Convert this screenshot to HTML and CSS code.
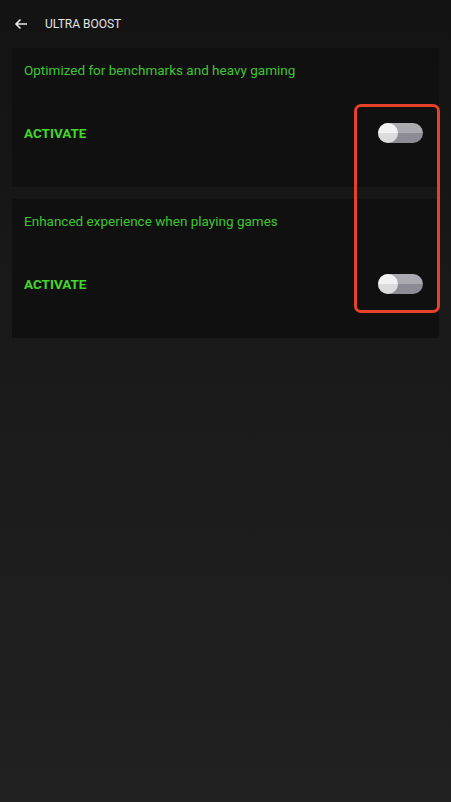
FILE: index.html
```html
<!DOCTYPE html>
<html lang="en">
<head>
  <meta charset="UTF-8" />
  <meta name="viewport" content="width=device-width, initial-scale=1.0" />
  <title>Ultra Boost</title>
  <link rel="stylesheet" href="styles.css">
</head>
<body>

  <div class="top-bar">
    <svg class="back" width="14" height="12" viewBox="0 0 14 12">
      <path d="M13 6H2M6.5 1.5L2 6l4.5 4.5" fill="none" stroke="#e6e6e6" stroke-width="1.6"/>
    </svg>
    <span class="title">ULTRA BOOST</span>
  </div>

  <div class="cards">
    <div class="card">
      <p class="desc">Optimized for benchmarks and heavy gaming</p>
      <div class="card-row">
        <span class="label">ACTIVATE</span>
        <span class="toggle"><span class="knob"></span></span>
      </div>
    </div>

    <div class="card">
      <p class="desc">Enhanced experience when playing games</p>
      <div class="card-row">
        <span class="label">ACTIVATE</span>
        <span class="toggle"><span class="knob"></span></span>
      </div>
    </div>

    <div class="highlight"></div>
  </div>

</body>
</html>
```

FILE: styles.css
```css
* {
  box-sizing: border-box;
  margin: 0;
  padding: 0;
}

html, body {
  height: 100%;
}

body {
  font-family: Roboto, "Noto Sans", sans-serif;
  background: linear-gradient(180deg, #131313 0%, #1a1a1a 45%, #212121 100%);
  color: #e6e6e6;
}

.top-bar {
  display: flex;
  align-items: center;
  height: 48px;
  padding-left: 14px;
}

.back {
  display: block;
}

.title {
  margin-left: 17px;
  font-size: 12px;
  color: #e4e4e4;
}

.cards {
  position: relative;
  display: flex;
  flex-direction: column;
  gap: 12px;
  margin: 0 12px;
}

.card {
  background: #101010;
  height: 139px;
  padding: 12px 16px 0 12px;
}

.desc {
  font-size: 13.5px;
  line-height: 20px;
  color: #3fc532;
}

.card-row {
  display: flex;
  align-items: center;
  justify-content: space-between;
  margin-top: 43px;
  height: 20px;
}

.label {
  font-size: 13.5px;
  font-weight: bold;
  color: #44d62c;
}

.toggle {
  position: relative;
  display: block;
  width: 45px;
  height: 20px;
  border-radius: 10px;
  background: linear-gradient(180deg, #abaab1 50%, #8d8c94 50%);
}

.knob {
  position: absolute;
  left: 0;
  top: 0;
  width: 20px;
  height: 20px;
  border-radius: 50%;
  background: linear-gradient(180deg, #f2f2f2 50%, #dcdcdc 50%);
}

.highlight {
  position: absolute;
  left: 342px;
  top: 56px;
  width: 86px;
  height: 209px;
  border: 3px solid #e8412b;
  border-radius: 7px;
}
```
